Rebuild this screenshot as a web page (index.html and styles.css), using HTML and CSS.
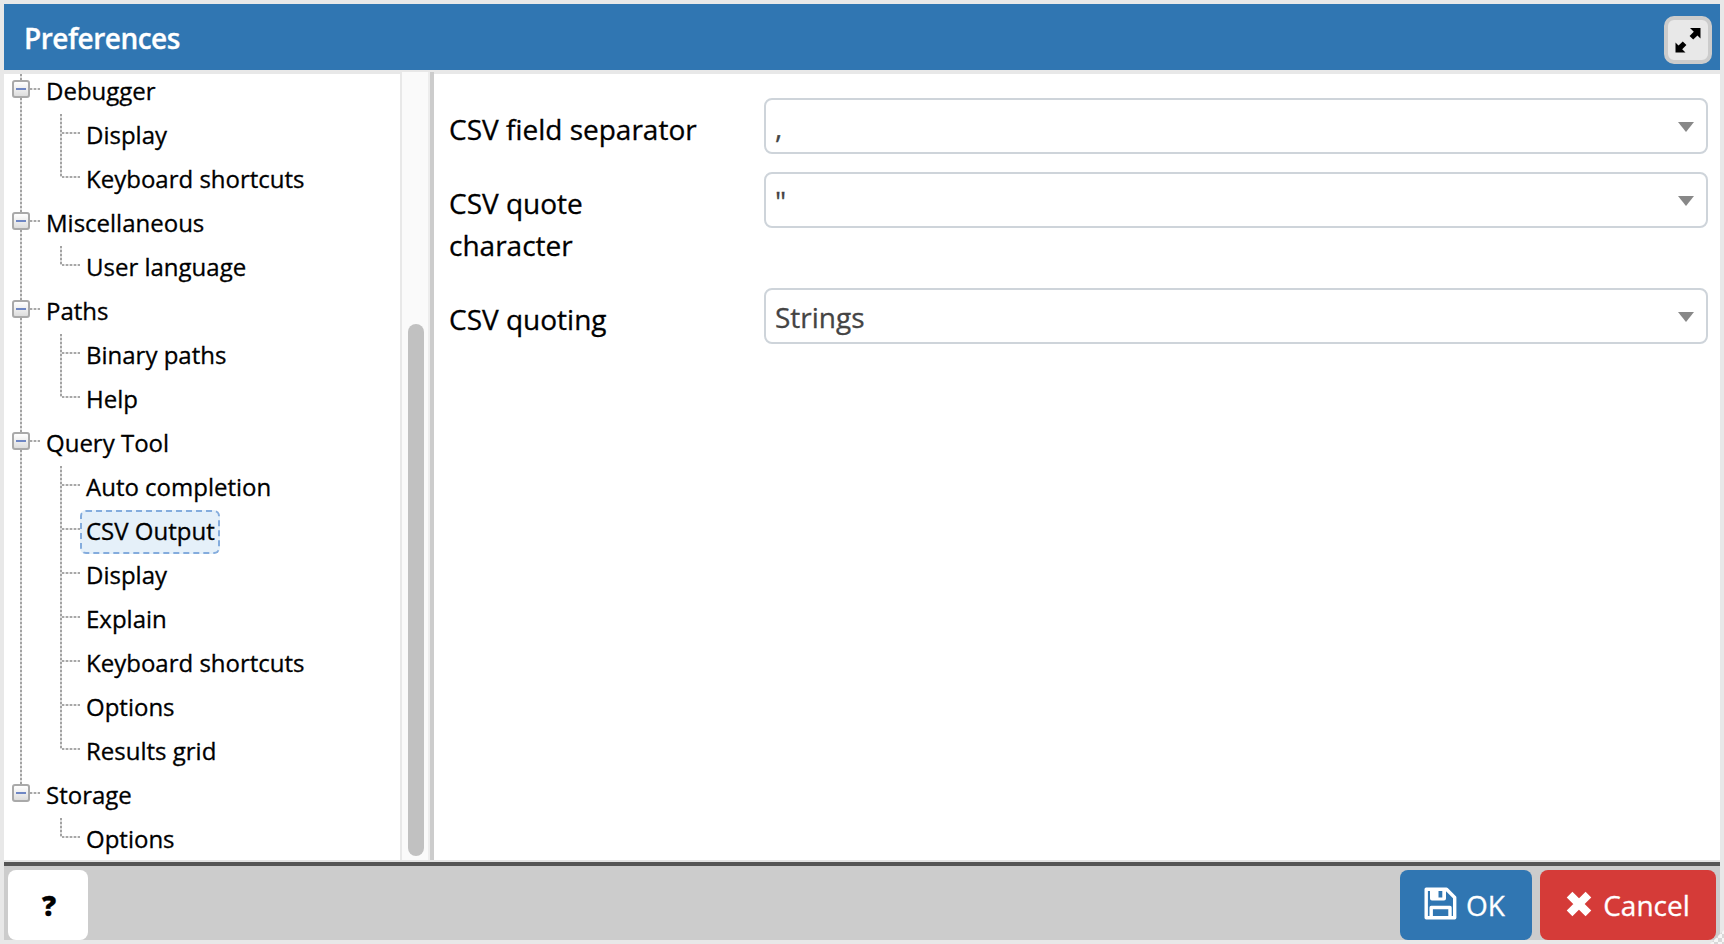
FILE: index.html
```
<!DOCTYPE html>
<html lang="en">
<head>
<meta charset="utf-8">
<title>Preferences</title>
<link rel="stylesheet" href="styles.css">
</head>
<body>
<div class="dialog">
  <header class="header">
    <span class="title">Preferences</span>
    <button class="maximize" aria-label="Maximize">
      <svg width="26" height="26" viewBox="0 0 26 26" fill="#000">
        <path d="M15 1h10.500v10.500l-3-3.100-4.300 4.200-3.600-3.600 4.200-4.200z"/>
        <path d="M10.500 25.500H.5V15.500l3 3.100 4.300-4.200 3.600 3.600-4.200 4.200z"/>
      </svg>
    </button>
  </header>
  <main class="body">
    <nav class="tree">
      <ul class="list">
        <li class="group"><i class="toggle"></i><span class="label">Debugger</span></li>
        <li class="item"><span class="label">Display</span></li>
        <li class="item last"><span class="label">Keyboard shortcuts</span></li>
        <li class="group"><i class="toggle"></i><span class="label">Miscellaneous</span></li>
        <li class="item last"><span class="label">User language</span></li>
        <li class="group"><i class="toggle"></i><span class="label">Paths</span></li>
        <li class="item"><span class="label">Binary paths</span></li>
        <li class="item last"><span class="label">Help</span></li>
        <li class="group"><i class="toggle"></i><span class="label">Query Tool</span></li>
        <li class="item"><span class="label">Auto completion</span></li>
        <li class="item"><span class="label selected">CSV Output</span></li>
        <li class="item"><span class="label">Display</span></li>
        <li class="item"><span class="label">Explain</span></li>
        <li class="item"><span class="label">Keyboard shortcuts</span></li>
        <li class="item"><span class="label">Options</span></li>
        <li class="item last"><span class="label">Results grid</span></li>
        <li class="group end"><i class="toggle"></i><span class="label">Storage</span></li>
        <li class="item last end"><span class="label">Options</span></li>
      </ul>
    </nav>
    <div class="scrollbar"><div class="thumb"></div></div>
    <div class="splitter"></div>
    <section class="form">
      <div class="field"><label>CSV field separator</label><div class="select"><span>,</span><i class="caret"></i></div></div>
      <div class="field"><label>CSV quote character</label><div class="select"><span>"</span><i class="caret"></i></div></div>
      <div class="field"><label>CSV quoting</label><div class="select"><span>Strings</span><i class="caret"></i></div></div>
    </section>
  </main>
  <footer class="footer">
    <button class="btn help">?</button>
    <div class="actions">
      <button class="btn ok">
        <svg width="33" height="33" viewBox="0 0 33 33" fill="none" stroke="#fff" stroke-width="3.400" stroke-linejoin="round">
          <path d="M2.200 2.200H22.500L30.700 10.500V30.700H2.200z"/>
          <path d="M7.200 30V20.500H26V30"/>
          <path fill="#fff" fill-rule="evenodd" stroke="none" d="M6 2h16v9.500q0 2-2 2H8q-2 0-2-2zM14.500 4v6.500h3.800V4z"/>
        </svg>
        <span>OK</span>
      </button>
      <button class="btn cancel">
        <svg width="26" height="26" viewBox="0 0 26 26" stroke="#fff" stroke-width="8" stroke-linecap="square" stroke-linejoin="round">
          <path d="M6.400 6.400L19.600 19.600M19.600 6.400L6.400 19.600"/>
        </svg>
        <span>Cancel</span>
      </button>
    </div>
  </footer>
  <div class="grip"></div>
</div>
</body>
</html>
```
FILE: styles.css
```
* { box-sizing: border-box; }
body {
  margin: 0;
  background: #e8e8e8;
  font-family: "Open Sans", sans-serif;
  color: #000;
  -webkit-text-stroke: 0.3px;
}
button { font: inherit; padding: 0; border: 0; }
.dialog {
  position: relative;
  height: 944px;
  padding: 4px;
  display: flex;
  flex-direction: column;
}
.header {
  height: 66px;
  flex: none;
  display: flex;
  justify-content: space-between;
  padding: 12px 8px 0 20px;
  background: #3076b2;
  color: #fff;
}
.title {
  font-size: 28px;
  font-weight: 600;
  line-height: 44px;
  letter-spacing: -0.5px;
}
.maximize {
  width: 48px;
  height: 48px;
  border: 4px solid #ccc;
  border-radius: 10px;
  background: #e8e8e8;
  display: grid;
  place-items: center;
}
.body {
  height: 790px;
  margin-top: 2px;
  flex: none;
  display: flex;
  border-top: 2px solid #e8e8e8;
  border-bottom: 2px solid #e4e4e4;
  background: #fff;
}
.tree { width: 396px; overflow: hidden; }
.list {
  list-style: none;
  margin: -4px 0 0;
  padding: 0;
  --v: repeating-linear-gradient(to bottom, #a2a2a2 0 2px, #dedede 2px 4px);
  --h: repeating-linear-gradient(to right, #a8a8a8 0 2px, #e2e2e2 2px 4px);
}
.group, .item {
  height: 44px;
  display: flex;
  background-repeat: no-repeat;
}
.group {
  padding-left: 8px;
  background-image: var(--v), var(--h);
  background-position: 16px 0, 26px 18px;
  background-size: 2px 44px, 10px 2px;
}
.group.end { background-size: 2px 18px, 10px 2px; }
.item {
  padding-left: 76px;
  background-image: var(--v), var(--v), var(--h);
  background-position: 16px 0, 56px 0, 58px 18px;
  background-size: 2px 44px, 2px 44px, 18px 2px;
}
.item.last { background-size: 2px 44px, 2px 19px, 18px 2px; }
.item.end { background-size: 0 0, 2px 19px, 18px 2px; }
.toggle {
  width: 18px;
  height: 18px;
  margin: 10px 10px 0 0;
  border: 2px solid #a9a9a9;
  border-radius: 3px;
  background: linear-gradient(#6f87c4, #6f87c4) center / 10px 2px no-repeat,
    linear-gradient(#fff, #ddd);
}
.label {
  height: 44px;
  padding: 0 3px 0 4px;
  border: 2px solid transparent;
  border-radius: 6px;
  font-size: 24px;
  line-height: 38px;
  white-space: nowrap;
}
.group .label { padding: 0; margin-left: 4px; }
.selected {
  background: #e5f0f9;
  border: 2px dashed #84acdd;
}
.scrollbar {
  width: 30px;
  margin-top: -2px;
  background: #fafafa;
  border-left: 2px solid #e8e8e8;
  border-right: 2px solid #ededed;
}
.thumb {
  width: 16px;
  height: 532px;
  margin: 252px 0 0 6px;
  border-radius: 8px;
  background: #c1c1c1;
}
.splitter { width: 4px; margin-top: -2px; background: #ccc; }
.form {
  flex: 1;
  padding: 24px 12px 0 15px;
}
.field {
  display: flex;
  align-items: flex-start;
  margin-bottom: 18px;
  font-size: 28px;
  line-height: 42px;
}
.field label { width: 315px; padding: 10px 60px 0 0; }
.field:nth-child(2) label { padding-right: 120px; padding-bottom: 4px; }
.select {
  flex: 1;
  height: 56px;
  border: 2px solid #ced4da;
  border-radius: 8px;
  padding: 2px 12px 0 9px;
  display: flex;
  justify-content: space-between;
  align-items: center;
  color: #444;
}
.caret {
  border: 8px solid transparent;
  border-top: 10px solid #888;
  border-bottom: 0;
}
.footer {
  flex: 1;
  border-top: 4px solid #555;
  background: #ccc;
  padding: 4px 4px 0;
  display: flex;
  justify-content: space-between;
}
.btn {
  height: 70px;
  border-radius: 8px;
  display: flex;
  align-items: center;
  justify-content: center;
  color: #fff;
  font-size: 28px;
}
.help {
  width: 80px;
  padding-left: 2px;
  background: #fff;
  color: #000;
  font-weight: 800;
}
.actions { display: flex; gap: 8px; }
.ok { width: 132px; gap: 9px; padding-right: 3px; background: #3076b2; }
.ok svg { margin-top: -4px; }
.cancel { width: 176px; gap: 11px; background: #d53b38; }
.cancel svg { margin-top: -2px; }
.grip {
  position: absolute;
  right: 0;
  bottom: 0;
  width: 14px;
  height: 14px;
  clip-path: polygon(100% 0, 100% 100%, 0 100%);
  background: repeating-conic-gradient(#f6f6f6 0 25%, #d8d8d8 0 50%) 0 0 / 8px 8px;
}
```
